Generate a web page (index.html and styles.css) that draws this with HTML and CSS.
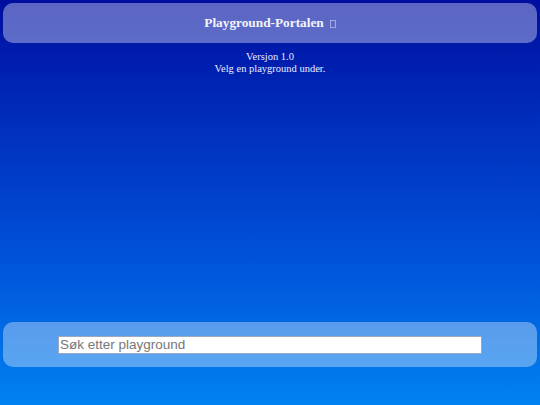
FILE: index.html
```html
<!DOCTYPE html>
<html lang="no">
<head>
<meta charset="utf-8">
<title>Playground-Portalen</title>
<link rel="stylesheet" href="styles.css">
</head>
<body>
<div class="page">
  <header class="topbar">
    <h1 class="title">Playground-Portalen <span class="missing-glyph" aria-hidden="true"></span></h1>
  </header>
  <div class="intro">
    <p>Versjon 1.0</p>
    <p>Velg en playground under.</p>
  </div>
  <main class="list"></main>
  <footer class="searchbar">
    <input class="search" type="text" placeholder="Søk etter playground">
  </footer>
</div>
</body>
</html>
```
FILE: styles.css
```css
html, body {
  margin: 0;
  height: 100%;
}
body {
  background: linear-gradient(to bottom, #000ea0 0%, #0050d8 62%, #0082f0 100%);
  font-family: "Liberation Serif", "Times New Roman", serif;
  color: #fff;
}
.page {
  display: flex;
  flex-direction: column;
  height: 100%;
  padding: 3px;
  box-sizing: border-box;
}
.topbar {
  height: 40px;
  border-radius: 10px;
  background: rgba(255, 255, 255, 0.36);
  display: flex;
  align-items: center;
  justify-content: center;
}
.title {
  margin: 0;
  font-size: 13.3px;
  font-weight: bold;
  color: #f4f4fa;
  display: flex;
  align-items: center;
  gap: 6px;
}
.missing-glyph {
  display: inline-block;
  width: 4px;
  height: 6px;
  border: 1px solid #a4a8dc;
  margin-top: 1px;
}
.intro {
  margin-top: 8px;
  text-align: center;
  font-size: 10.5px;
  line-height: 12px;
  color: #e8ecff;
}
.intro p {
  margin: 0;
}
.list {
  flex: 1;
}
.searchbar {
  height: 45px;
  margin-bottom: 35px;
  border-radius: 10px;
  background: rgba(255, 255, 255, 0.35);
  display: flex;
  align-items: center;
  justify-content: center;
}
.search {
  width: 424px;
  height: 18px;
  box-sizing: border-box;
  border: 1px solid #9aa8c0;
  padding: 0 1px;
  font-family: "Liberation Sans", Arial, sans-serif;
  font-size: 13.5px;
  background: #fff;
  color: #333;
  outline: none;
}
.search::placeholder {
  color: #777;
}
```
